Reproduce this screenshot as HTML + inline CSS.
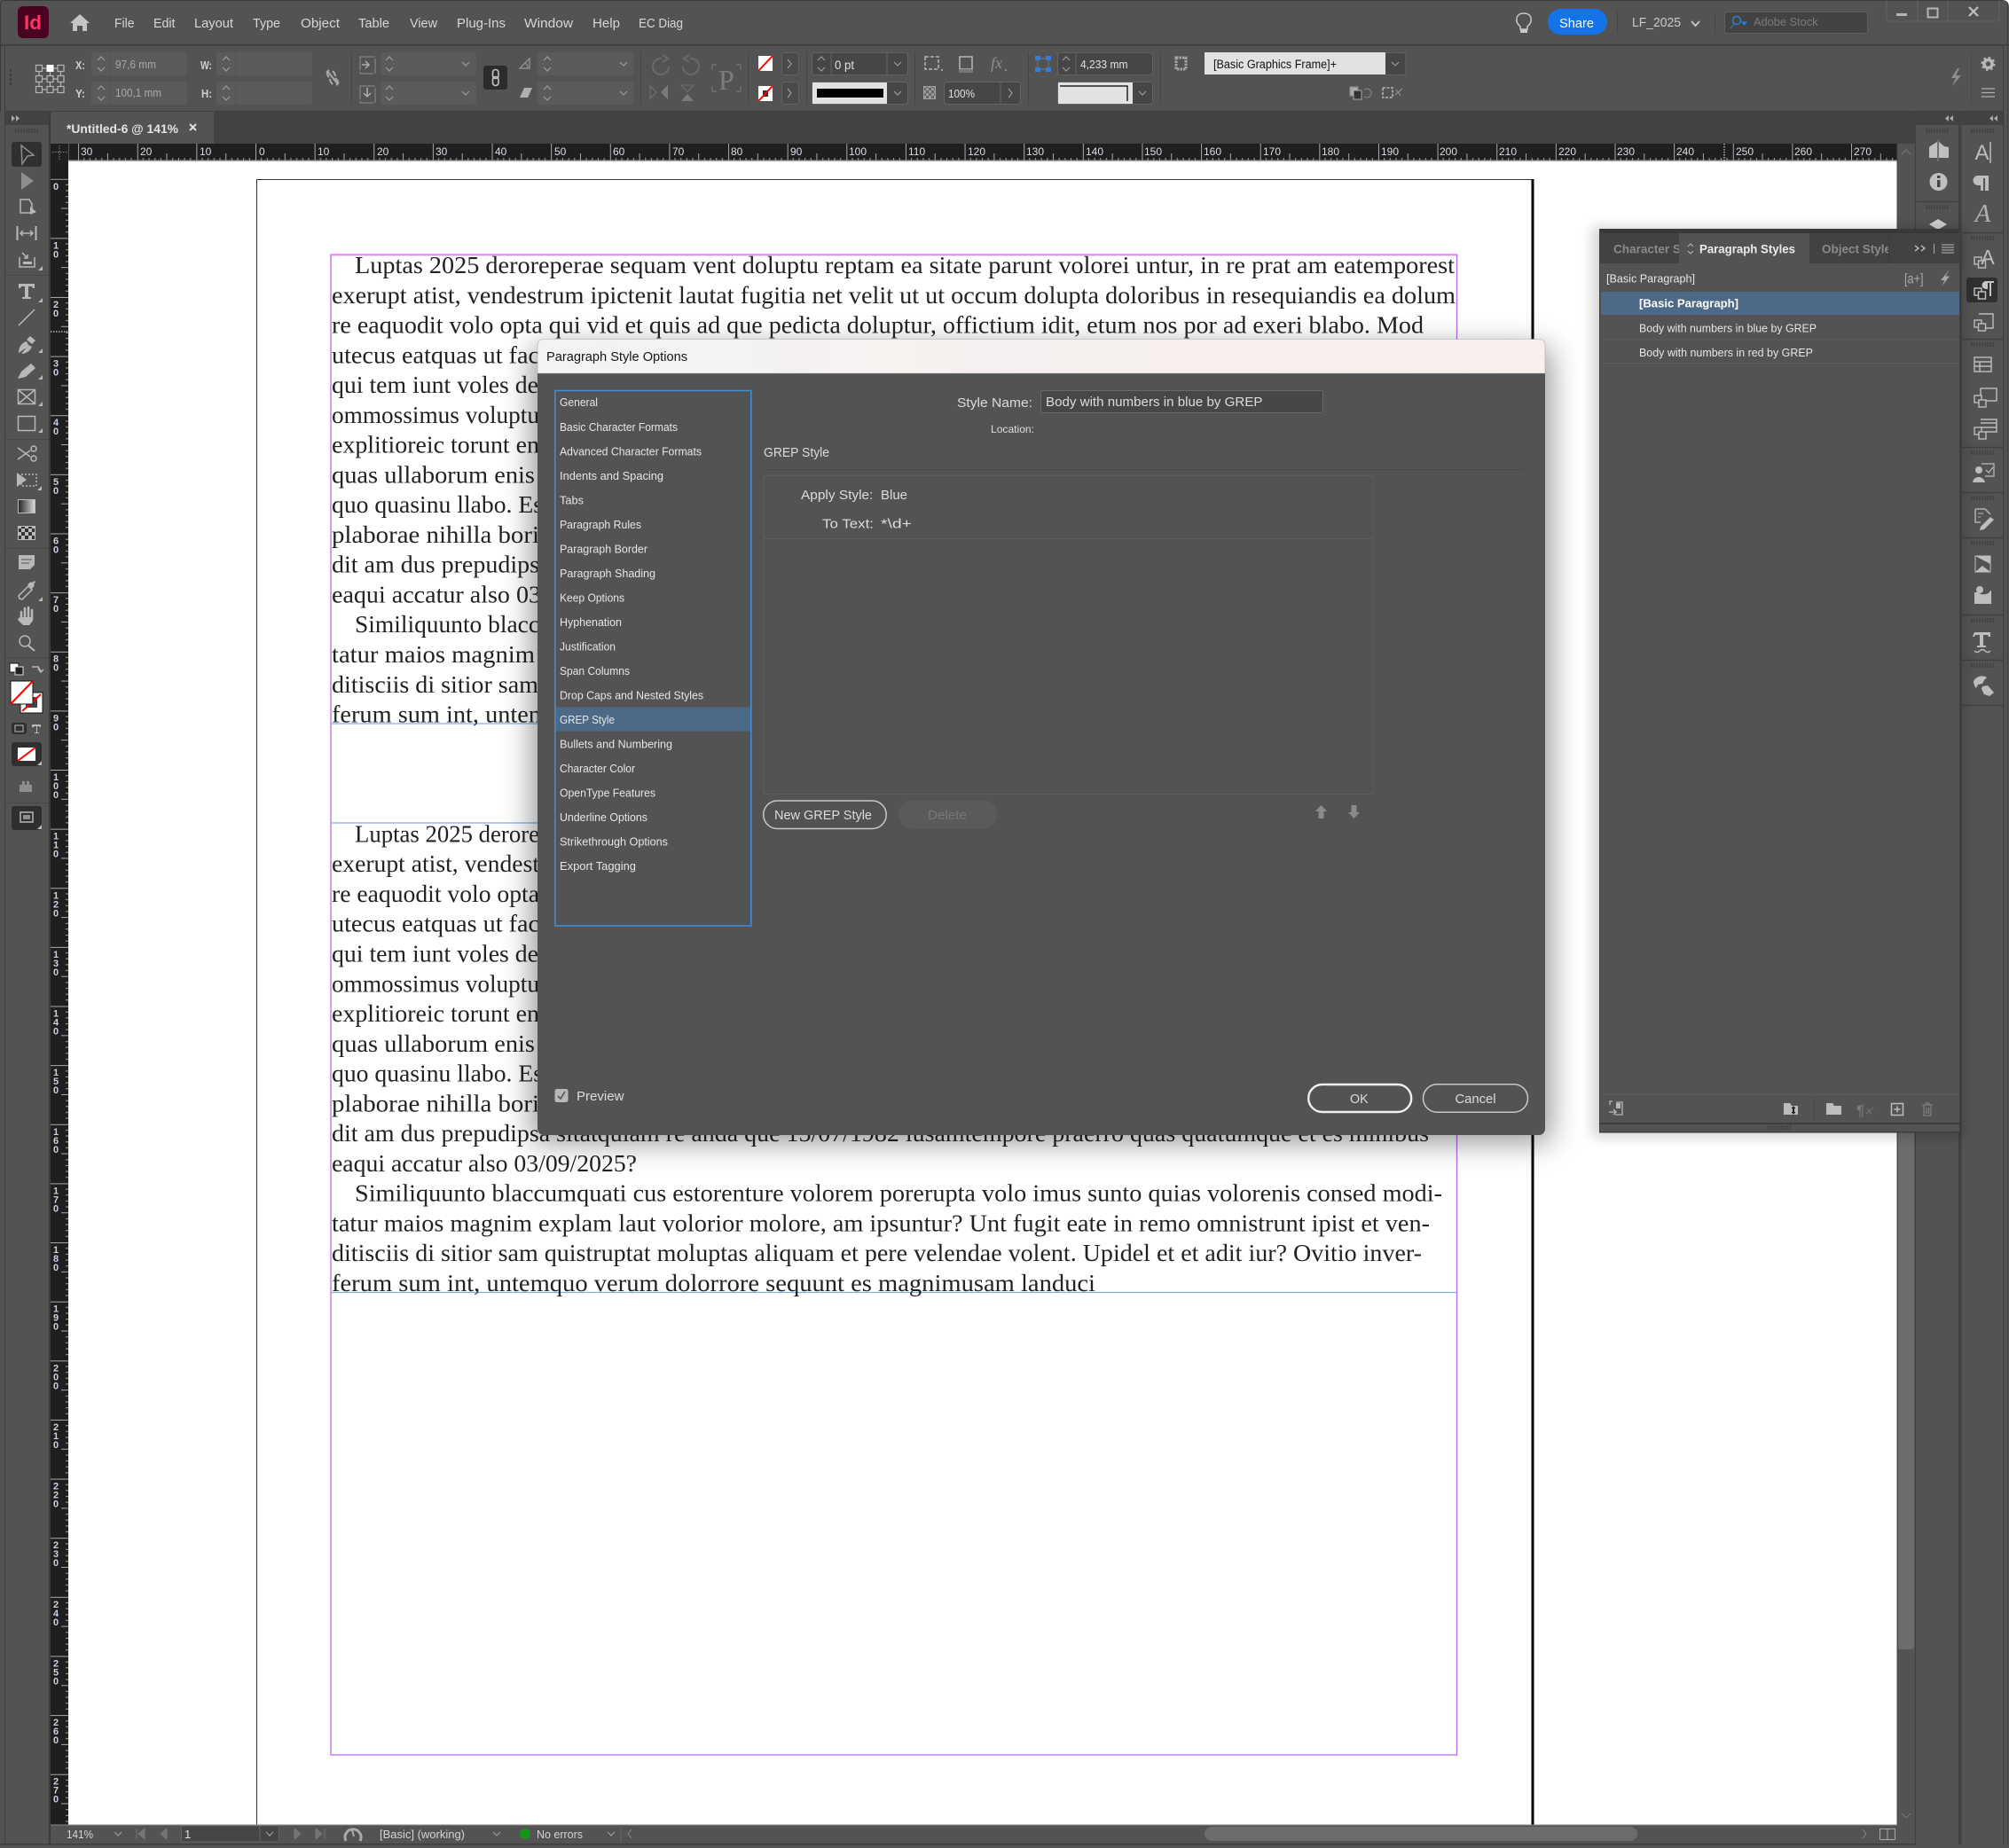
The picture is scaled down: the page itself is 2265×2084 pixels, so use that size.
<!DOCTYPE html>
<html><head><meta charset="utf-8"><title>Paragraph Style Options</title>
<style>
html,body{margin:0;padding:0;background:#535353}
svg{display:block}
text{font-family:"Liberation Sans",sans-serif}
.m{font-size:14.5px;fill:#d6d6d6}
.s{font-family:"Liberation Serif",serif;font-size:27px;fill:#222}
.l{font-size:12.5px;fill:#e6e6e6}
.d{font-size:15px;fill:#dcdcdc}
.c{font-size:12.5px;fill:#d0d0d0}
.r{font-size:12px;fill:#d8dde6}
.v{font-size:11px;fill:#c5d2e6;font-weight:bold}
.i{fill:none;stroke:#b8b8b8;stroke-width:1.5}
.f{fill:#b8b8b8}
.n{fill:none;stroke:#9c9c9c;stroke-width:1.2}
</style></head>
<body>
<svg xmlns="http://www.w3.org/2000/svg" width="2265" height="2084" viewBox="0 0 2265 2084">
<defs>
<pattern id="hr" patternUnits="userSpaceOnUse" x="288" y="162" width="66.63" height="19"><path d="M.5 0V19M33.3 11V19M6.66 16V19M13.3 16V19M20 16V19M26.65 16V19M39.98 16V19M46.64 16V19M53.3 16V19M59.97 16V19" stroke="#a8a8a8" fill="none"/></pattern>
<pattern id="vr" patternUnits="userSpaceOnUse" x="57" y="201.7" width="20" height="66.63"><path d="M0 .5H20M12 33.3H20M17 6.66H20M17 13.3H20M17 20H20M17 26.65H20M17 39.98H20M17 46.64H20M17 53.3H20M17 59.97H20" stroke="#a8a8a8" fill="none"/></pattern>
<pattern id="ck" patternUnits="userSpaceOnUse" width="8" height="8"><rect width="8" height="8" fill="#bbb"/><rect width="4" height="4" fill="#333"/><rect x="4" y="4" width="4" height="4" fill="#333"/></pattern>
<pattern id="ck2" patternUnits="userSpaceOnUse" width="6" height="6"><rect width="6" height="6" fill="#999"/><rect width="3" height="3" fill="#666"/><rect x="3" y="3" width="3" height="3" fill="#666"/></pattern>
<linearGradient id="gr"><stop offset="0" stop-color="#222"/><stop offset="1" stop-color="#ddd"/></linearGradient>
<linearGradient id="tb"><stop offset="0" stop-color="#f3f3f3"/><stop offset="1" stop-color="#f9efec"/></linearGradient>
<filter id="bl" x="-20%" y="-20%" width="140%" height="140%"><feGaussianBlur stdDeviation="17"/></filter>
<filter id="bs" x="-10%" y="-10%" width="120%" height="120%"><feGaussianBlur stdDeviation="7"/></filter>
<g id="up"><path d="M-4 2L0-2 4 2" class="n"/></g>
<g id="dn"><path d="M-4-2L0 2 4-2" class="n"/></g>
<g id="stp"><use href="#up" x="0" y="-6"/><use href="#dn" x="0" y="6"/></g>
<g id="grip"><path d="M0 0v5M3 0v5M6 0v5M9 0v5M12 0v5M15 0v5M18 0v5M21 0v5M24 0v5" stroke="#383838" fill="none"/></g>
<g id="co"><path d="M0 0L5 0 5-5Z" fill="#b8b8b8"/></g>
</defs>

<!-- window -->
<rect width="2265" height="2084" fill="#535353"/>
<rect x=".5" y=".5" width="2263" height="2080" rx="4" fill="none" stroke="#3a3a3a"/>
<path d="M2257 0H2265V8Q2265 0 2257 0Z" fill="#fff"/>
<rect y="50" width="2265" height="1.5" fill="#3c3c3c"/>
<rect x="5" y="50" width="1" height="76" fill="#3e3e3e"/>
<rect x="2258" y="50" width="1" height="76" fill="#3e3e3e"/>
<rect y="125" x="5" width="2254" height="1.5" fill="#3f3f3f"/>

<!-- menu -->
<rect x="20" y="7" width="35" height="36" rx="6" fill="#49021f"/>
<text x="27" y="33" font-size="22" font-weight="bold" fill="#ff3366" textLength="20" lengthAdjust="spacingAndGlyphs">Id</text>
<path d="M90 16L101 26H98V35H93V29H87V35H82V26H79Z" fill="#c4c4c4"/>
<text class="m" x="129" y="31" textLength="22.5" lengthAdjust="spacingAndGlyphs">File</text>
<text class="m" x="173" y="31" textLength="24.5" lengthAdjust="spacingAndGlyphs">Edit</text>
<text class="m" x="219" y="31" textLength="44" lengthAdjust="spacingAndGlyphs">Layout</text>
<text class="m" x="285" y="31" textLength="31" lengthAdjust="spacingAndGlyphs">Type</text>
<text class="m" x="339" y="31" textLength="44" lengthAdjust="spacingAndGlyphs">Object</text>
<text class="m" x="404" y="31" textLength="35" lengthAdjust="spacingAndGlyphs">Table</text>
<text class="m" x="462" y="31" textLength="31" lengthAdjust="spacingAndGlyphs">View</text>
<text class="m" x="515" y="31" textLength="55" lengthAdjust="spacingAndGlyphs">Plug-Ins</text>
<text class="m" x="591" y="31" textLength="55" lengthAdjust="spacingAndGlyphs">Window</text>
<text class="m" x="668" y="31" textLength="31" lengthAdjust="spacingAndGlyphs">Help</text>
<text class="m" x="720" y="31" textLength="50" lengthAdjust="spacingAndGlyphs">EC Diag</text>
<path d="M1714 30C1707 24 1709 15 1718 15C1727 15 1729 24 1722 30V33H1714Z" fill="none" stroke="#c8c8c8" stroke-width="1.5"/><rect x="1714" y="33" width="8" height="4" fill="#c8c8c8"/>
<rect x="1745" y="10" width="67" height="29" rx="14.5" fill="#1473e6"/>
<text x="1758" y="31" font-size="15" fill="#fff" textLength="39" lengthAdjust="spacingAndGlyphs">Share</text>
<rect x="1823" y="13" width="1" height="24" fill="#474747"/>
<text x="1840" y="30" font-size="15" fill="#c9c9c9" textLength="55" lengthAdjust="spacingAndGlyphs">LF_2025</text>
<path d="M1907 24L1911.500 29 1916 24" fill="none" stroke="#c8c8c8" stroke-width="1.8"/>
<rect x="1933" y="13" width="1" height="24" fill="#474747"/>
<rect x="1944.500" y="13.500" width="161" height="24" rx="2" fill="#434343" stroke="#5f5f5f"/>
<circle cx="1958" cy="23" r="4.500" fill="none" stroke="#2f7fd6" stroke-width="1.5"/><path d="M1955 27L1951 32M1964 25h5l-2.500 3z" stroke="#2f7fd6" fill="#2f7fd6"/>
<text x="1977" y="29" font-size="13" fill="#7b7b7b" textLength="72.500" lengthAdjust="spacingAndGlyphs">Adobe Stock</text>
<path d="M2127 0V21Q2127 24 2130 24H2251Q2254 24 2254 21V0M2162 0V24M2196 0V24" fill="none" stroke="#626262"/>
<rect x="2138" y="15" width="12" height="3" fill="#b5b5b5"/>
<rect x="2173.500" y="9.500" width="11" height="10" fill="none" stroke="#b5b5b5" stroke-width="2"/>
<path d="M2220 8L2230 18M2230 8L2220 18" stroke="#c0c0c0" stroke-width="2.200"/>

<!-- control panel -->
<path d="M12 78v3M12 83v3M12 88v3M12 93v3" stroke="#3c3c3c" stroke-width="2"/>
<g fill="none" stroke="#b5b5b5" stroke-width="1.200">
<rect x="40.500" y="73.500" width="7" height="7"/><rect x="65" y="73.500" width="7" height="7"/>
<rect x="40.500" y="85.500" width="7" height="7"/><rect x="53" y="85.500" width="7" height="7"/><rect x="65" y="85.500" width="7" height="7"/>
<rect x="40.500" y="97.500" width="7" height="7"/><rect x="53" y="97.500" width="7" height="7"/><rect x="65" y="97.500" width="7" height="7"/>
<path d="M47.500 77h5M60 77h5M47.500 89h5M60 89h5M47.500 101h5M60 101h5M44 80.500v5M44 92.500v5M56.500 80.500v5M56.500 92.500v5M68.500 80.500v5M68.500 92.500v5"/></g>
<rect x="52.500" y="73" width="8" height="8" fill="#fff"/>

<g fill="#5b5b5b">
<rect x="103" y="59" width="108" height="26" rx="3"/><rect x="103" y="92" width="108" height="26" rx="3"/>
<rect x="244" y="59" width="108" height="26" rx="3"/><rect x="244" y="92" width="108" height="26" rx="3"/>
<rect x="429" y="59" width="108" height="26" rx="3"/><rect x="429" y="92" width="108" height="26" rx="3"/>
<rect x="606" y="59" width="108" height="26" rx="3"/><rect x="606" y="92" width="108" height="26" rx="3"/>
</g>
<g fill="#535353"><rect x="124" y="59" width="1" height="26"/><rect x="124" y="92" width="1" height="26"/><rect x="265" y="59" width="1" height="26"/><rect x="265" y="92" width="1" height="26"/></g>
<use href="#stp" x="114" y="72"/><use href="#stp" x="114" y="105"/><use href="#stp" x="255" y="72"/><use href="#stp" x="255" y="105"/>
<use href="#stp" x="439" y="72"/><use href="#stp" x="439" y="105"/><use href="#stp" x="617" y="72"/><use href="#stp" x="617" y="105"/>
<use href="#dn" x="525" y="72"/><use href="#dn" x="525" y="105"/><use href="#dn" x="703" y="72"/><use href="#dn" x="703" y="105"/>
<text class="c" x="85" y="78" textLength="11" lengthAdjust="spacingAndGlyphs" font-weight="bold">X:</text>
<text class="c" x="85" y="110" textLength="11" lengthAdjust="spacingAndGlyphs" font-weight="bold">Y:</text>
<text class="c" x="226" y="78" textLength="13" lengthAdjust="spacingAndGlyphs" font-weight="bold">W:</text>
<text class="c" x="227" y="110" textLength="12" lengthAdjust="spacingAndGlyphs" font-weight="bold">H:</text>
<text x="130" y="77" font-size="13" fill="#a8a8a8" textLength="46" lengthAdjust="spacingAndGlyphs">97,6 mm</text>
<text x="130" y="109" font-size="13" fill="#a8a8a8" textLength="52" lengthAdjust="spacingAndGlyphs">100,1 mm</text>
<path d="M369 80L381 95M371 79c-4 2-2 6 0 8M378 88c3 3 5 6 1 8M375 80c2 2 3 4 3 6M372 89c0 2 1 4 3 6" fill="none" stroke="#a8a8a8" stroke-width="2"/>
<rect x="396" y="59" width="1" height="59" fill="#474747"/>
<rect x="406" y="64" width="17" height="19" fill="none" stroke="#8e8e8e" stroke-dasharray="17 2"/><path d="M408 73h8M412 69l4 4-4 4" stroke="#b0b0b0" fill="none" stroke-width="1.500"/>
<rect x="406" y="97" width="17" height="19" fill="none" stroke="#8e8e8e" stroke-dasharray="17 2"/><path d="M414 99v10M410 105l4 4 4-4" stroke="#b0b0b0" fill="none" stroke-width="1.500"/>
<rect x="545" y="74" width="27" height="27" rx="3" fill="#2c2c2c"/>
<rect x="555.500" y="78.500" width="6.500" height="10" rx="3.200" fill="none" stroke="#c5c5c5" stroke-width="1.600"/><rect x="555.500" y="86.500" width="6.500" height="10" rx="3.200" fill="none" stroke="#c5c5c5" stroke-width="1.600"/>
<path d="M586 77L597 66V77ZM592 71a6 6 0 0 1 3 6" fill="none" stroke="#8e8e8e" stroke-width="1.400"/><path d="M586 110L591 99H600L595 110Z" fill="#b0b0b0"/>
<rect x="722" y="59" width="1" height="59" fill="#474747"/>
<g fill="none" stroke="#6a6a6a" stroke-width="2"><path d="M746 66a9 9 0 1 0 8 9M747 62l6 4-6 4"/><path d="M778 66a9 9 0 1 1-8 9M777 62l-6 4 6 4"/></g>
<path d="M733 97l7 7-7 7z" fill="none" stroke="#6e6e6e"/><path d="M753 96v16l-8-8z M768 114h14l-7-8z" fill="#7a7a7a"/><path d="M768 96h14l-7 8z" fill="none" stroke="#6e6e6e"/>
<path d="M803 79v-6h5M830 73h5v6M803 97v6h5M835 97v6h-5" fill="none" stroke="#7d7d7d"/>
<text x="810" y="101" font-size="32" fill="#7d7d7d" style="font-family:'Liberation Serif',serif">P</text>
<rect x="843" y="59" width="1" height="59" fill="#474747"/>
<rect x="855" y="63" width="16" height="17" fill="#fff"/><path d="M855 80L871 63" stroke="#f00" stroke-width="2"/>
<rect x="855" y="97" width="16" height="17" fill="#fff"/><rect x="860" y="102" width="6" height="7" fill="#333"/><path d="M855 114L871 97" stroke="#f00" stroke-width="2"/>
<rect x="881.500" y="59.500" width="19" height="25" rx="3" fill="#4a4a4a" stroke="#626262"/><rect x="881.500" y="92.500" width="19" height="25" rx="3" fill="#4a4a4a" stroke="#626262"/>
<path d="M888 67l4 5-4 5M888 100l4 5-4 5" fill="none" stroke="#b0b0b0"/>
<rect x="909" y="59" width="1" height="59" fill="#474747"/>
<rect x="915.500" y="59.500" width="108" height="25" rx="3" fill="#464646" stroke="#636363"/>
<path d="M937 60v24M1000 60v24" stroke="#636363"/><use href="#stp" x="926" y="72"/><use href="#dn" x="1012" y="72"/>
<text x="941" y="78" font-size="13.500" fill="#e0e0e0" textLength="22" lengthAdjust="spacingAndGlyphs">0 pt</text>
<rect x="915.500" y="92.500" width="108" height="25" rx="3" fill="#464646" stroke="#636363"/>
<rect x="916" y="93" width="84" height="24" fill="#e2e2e2"/><rect x="921" y="100" width="75" height="10" fill="#000"/><use href="#dn" x="1012" y="105"/>
<rect x="1031" y="59" width="1" height="59" fill="#474747"/>
<rect x="1043" y="64" width="15" height="14" class="i" stroke-dasharray="4 2"/><circle cx="1062" cy="79" r="1" fill="#b8b8b8"/>
<rect x="1082" y="64" width="14" height="14" class="i"/><rect x="1081" y="78" width="16" height="4" fill="#777"/>
<text x="1117" y="77" font-size="18" font-style="italic" fill="#8e8e8e" style="font-family:'Liberation Serif',serif">fx</text><circle cx="1134" cy="79" r="1" fill="#999"/>
<rect x="1041.500" y="97.500" width="13" height="14" fill="url(#ck2)" stroke="#a0a0a0"/>
<rect x="1064.500" y="92.500" width="86" height="25" rx="3" fill="#464646" stroke="#636363"/><path d="M1128 93v24" stroke="#636363"/><path d="M1137 100l4 5-4 5" fill="none" stroke="#b0b0b0"/>
<text x="1069" y="110" font-size="13" fill="#e0e0e0" textLength="30" lengthAdjust="spacingAndGlyphs">100%</text>
<rect x="1159" y="59" width="1" height="59" fill="#474747"/>
<g fill="#2f7fe0"><rect x="1167" y="63" width="6" height="5"/><rect x="1179" y="63" width="6" height="5"/><rect x="1167" y="76" width="6" height="5"/><rect x="1179" y="76" width="6" height="5"/></g><path d="M1173 66h6M1173 78h6M1170 68v8M1182 68v8" stroke="#777"/>
<rect x="1192.500" y="59.500" width="107" height="25" rx="3" fill="#464646" stroke="#636363"/><path d="M1213 60v24" stroke="#636363"/><use href="#stp" x="1202" y="72"/>
<text x="1218" y="77" font-size="13" fill="#e0e0e0" textLength="53.500" lengthAdjust="spacingAndGlyphs">4,233 mm</text>
<rect x="1192.500" y="92.500" width="107" height="25" rx="3" fill="#464646" stroke="#636363"/>
<rect x="1193" y="93" width="84" height="24" fill="#e2e2e2"/><path d="M1195 97H1271V114" fill="none" stroke="#222" stroke-width="1.500"/><use href="#dn" x="1288" y="105"/>
<rect x="1308" y="59" width="1" height="59" fill="#474747"/>
<rect x="1326" y="65" width="11" height="13" fill="none" stroke="#a5a5a5" stroke-width="3" stroke-dasharray="2.500 1"/>
<rect x="1358" y="59" width="204" height="25" fill="#e2e2e2"/><path d="M1562 59.500h20q3 0 3 3v19q0 3-3 3h-20" fill="#464646" stroke="#636363"/><use href="#dn" x="1573" y="72"/>
<text x="1368" y="77" font-size="13.500" fill="#111" textLength="139" lengthAdjust="spacingAndGlyphs">[Basic Graphics Frame]+</text>
<rect x="1522" y="98" width="9" height="10" fill="#aaa" stroke="#888"/><rect x="1526" y="102" width="9" height="10" fill="#333" stroke="#aaa"/><path d="M1538 101a5 5 0 1 1 0 8" fill="none" stroke="#888"/>
<rect x="1559" y="99" width="11" height="11" class="i" stroke-dasharray="3 1.500"/><path d="M1573 107l8-7M1574 101l5 7" stroke="#999" fill="none"/>
<path d="M2207 77L2200 88H2205L2201 97L2211 85H2205L2209 77Z" fill="#8e8e8e"/>
<rect x="2222" y="59" width="1" height="59" fill="#474747"/>
<circle cx="2241.500" cy="72" r="4.500" fill="none" stroke="#b8b8b8" stroke-width="3.500"/><circle cx="2241.500" cy="72" r="7" fill="none" stroke="#b8b8b8" stroke-width="2" stroke-dasharray="2.500 3"/>
<path d="M2234 100h15M2234 104.500h15M2234 109h15" stroke="#b0b0b0" stroke-width="1.300"/>

<!-- tabs -->
<rect x="6" y="126" width="49" height="15" fill="#424242"/>
<path d="M13 130l4 3.500-4 3.500zM18 130l4 3.500-4 3.500z" fill="#aaa"/>
<rect x="57" y="126" width="2102" height="36" fill="#424242"/>
<rect x="57" y="126" width="184" height="36" fill="#535353"/>
<text x="75" y="150" font-size="14" font-weight="bold" fill="#e4e4e4" textLength="126" lengthAdjust="spacingAndGlyphs">*Untitled-6 @ 141%</text>
<path d="M214 140l7 7M221 140l-7 7" stroke="#e0e0e0" stroke-width="2"/>

<!-- canvas -->
<rect x="77" y="181" width="2062" height="1877" fill="#fff"/>
<rect x="57" y="162" width="2082" height="19" fill="#1f1f1f"/>
<rect x="57" y="162" width="2082" height="19" fill="url(#hr)"/>
<rect x="57" y="162" width="30" height="19" fill="#1f1f1f"/><path d="M77.500 162V181" stroke="#555"/>
<path d="M59 171.500H76M67 164V180" stroke="#888" stroke-dasharray="1.500 1.500"/>
<rect x="77" y="180.500" width="2062" height="1.500" fill="#a8a8a8"/>
<path d="M1944 162V181" stroke="#fff" stroke-dasharray="1.500 1.500"/>
<g>
<text class="r" x="91" y="175">30</text><text class="r" x="158" y="175">20</text><text class="r" x="225" y="175">10</text><text class="r" x="292" y="175">0</text><text class="r" x="358" y="175">10</text><text class="r" x="425" y="175">20</text><text class="r" x="491" y="175">30</text><text class="r" x="558" y="175">40</text><text class="r" x="625" y="175">50</text><text class="r" x="691" y="175">60</text><text class="r" x="758" y="175">70</text><text class="r" x="824" y="175">80</text><text class="r" x="891" y="175">90</text><text class="r" x="957" y="175">100</text><text class="r" x="1024" y="175">110</text><text class="r" x="1091" y="175">120</text><text class="r" x="1157" y="175">130</text><text class="r" x="1224" y="175">140</text><text class="r" x="1290" y="175">150</text><text class="r" x="1357" y="175">160</text><text class="r" x="1424" y="175">170</text><text class="r" x="1490" y="175">180</text><text class="r" x="1557" y="175">190</text><text class="r" x="1623" y="175">200</text><text class="r" x="1690" y="175">210</text><text class="r" x="1757" y="175">220</text><text class="r" x="1823" y="175">230</text><text class="r" x="1890" y="175">240</text><text class="r" x="1957" y="175">250</text><text class="r" x="2023" y="175">260</text><text class="r" x="2090" y="175">270</text>
</g>
<rect x="57" y="181" width="20" height="1877" fill="#1f1f1f"/>
<rect x="57" y="201.700" width="20" height="1856" fill="url(#vr)"/>
<path d="M57 374H76" stroke="#fff" stroke-dasharray="1.500 1.500"/>
<text class="v" x="60" y="214">0</text>
<text class="v" x="60" y="280.300">1<tspan x="60" dy="10">0</tspan></text>
<text class="v" x="60" y="347">2<tspan x="60" dy="10">0</tspan></text>
<text class="v" x="60" y="413.600">3<tspan x="60" dy="10">0</tspan></text>
<text class="v" x="60" y="480.200">4<tspan x="60" dy="10">0</tspan></text>
<text class="v" x="60" y="546.900">5<tspan x="60" dy="10">0</tspan></text>
<text class="v" x="60" y="613.500">6<tspan x="60" dy="10">0</tspan></text>
<text class="v" x="60" y="680.100">7<tspan x="60" dy="10">0</tspan></text>
<text class="v" x="60" y="746.700">8<tspan x="60" dy="10">0</tspan></text>
<text class="v" x="60" y="813.400">9<tspan x="60" dy="10">0</tspan></text>
<text class="v" x="60" y="880">1<tspan x="60" dy="10">0</tspan><tspan x="60" dy="10">0</tspan></text>
<text class="v" x="60" y="946.600">1<tspan x="60" dy="10">1</tspan><tspan x="60" dy="10">0</tspan></text>
<text class="v" x="60" y="1013.300">1<tspan x="60" dy="10">2</tspan><tspan x="60" dy="10">0</tspan></text>
<text class="v" x="60" y="1079.900">1<tspan x="60" dy="10">3</tspan><tspan x="60" dy="10">0</tspan></text>
<text class="v" x="60" y="1146.500">1<tspan x="60" dy="10">4</tspan><tspan x="60" dy="10">0</tspan></text>
<text class="v" x="60" y="1213.200">1<tspan x="60" dy="10">5</tspan><tspan x="60" dy="10">0</tspan></text>
<text class="v" x="60" y="1279.800">1<tspan x="60" dy="10">6</tspan><tspan x="60" dy="10">0</tspan></text>
<text class="v" x="60" y="1346.400">1<tspan x="60" dy="10">7</tspan><tspan x="60" dy="10">0</tspan></text>
<text class="v" x="60" y="1413">1<tspan x="60" dy="10">8</tspan><tspan x="60" dy="10">0</tspan></text>
<text class="v" x="60" y="1479.700">1<tspan x="60" dy="10">9</tspan><tspan x="60" dy="10">0</tspan></text>
<text class="v" x="60" y="1546.300">2<tspan x="60" dy="10">0</tspan><tspan x="60" dy="10">0</tspan></text>
<text class="v" x="60" y="1612.900">2<tspan x="60" dy="10">1</tspan><tspan x="60" dy="10">0</tspan></text>
<text class="v" x="60" y="1679.600">2<tspan x="60" dy="10">2</tspan><tspan x="60" dy="10">0</tspan></text>
<text class="v" x="60" y="1746.200">2<tspan x="60" dy="10">3</tspan><tspan x="60" dy="10">0</tspan></text>
<text class="v" x="60" y="1812.800">2<tspan x="60" dy="10">4</tspan><tspan x="60" dy="10">0</tspan></text>
<text class="v" x="60" y="1879.500">2<tspan x="60" dy="10">5</tspan><tspan x="60" dy="10">0</tspan></text>
<text class="v" x="60" y="1946.100">2<tspan x="60" dy="10">6</tspan><tspan x="60" dy="10">0</tspan></text>
<text class="v" x="60" y="2012.700">2<tspan x="60" dy="10">7</tspan><tspan x="60" dy="10">0</tspan></text>

<!-- page -->
<path d="M289.500 2058V202.500H1727" fill="none" stroke="#333"/>
<rect x="1726.500" y="202" width="3" height="1856" fill="#000"/>
<rect x="373" y="287" width="1269.500" height="1692" fill="none" stroke="#b56cf2" stroke-width="1.300"/>
<path d="M373 287.500H1642" stroke="#f27dff" stroke-width="1.800"/>
<path d="M373 816H610M373 928H610M373 1457.500H1642" stroke="#82aef0" stroke-width="1.200"/>

<text class="s" x="400" y="308" textLength="1240" lengthAdjust="spacingAndGlyphs">Luptas 2025 deroreperae sequam vent doluptu reptam ea sitate parunt volorei untur, in re prat am eatemporest</text>
<text class="s" x="374" y="341.800" textLength="1267" lengthAdjust="spacingAndGlyphs">exerupt atist, vendestrum ipictenit lautat fugitia net velit ut ut occum dolupta doloribus in resequiandis ea dolum</text>
<text class="s" x="374" y="375.500" textLength="1231" lengthAdjust="spacingAndGlyphs">re eaquodit volo opta qui vid et quis ad que pedicta doluptur, offictium idit, etum nos por ad exeri blabo. Mod</text>
<text class="s" x="374" y="409.300" textLength="234" lengthAdjust="spacingAndGlyphs">utecus eatquas ut fac</text>
<text class="s" x="374" y="443.100" textLength="233" lengthAdjust="spacingAndGlyphs">qui tem iunt voles de</text>
<text class="s" x="374" y="476.900" textLength="234" lengthAdjust="spacingAndGlyphs">ommossimus voluptu</text>
<text class="s" x="374" y="510.600" textLength="234" lengthAdjust="spacingAndGlyphs">explitioreic torunt en</text>
<text class="s" x="374" y="544.400" textLength="229" lengthAdjust="spacingAndGlyphs">quas ullaborum enis</text>
<text class="s" x="374" y="578.200" textLength="238" lengthAdjust="spacingAndGlyphs">quo quasinu llabo. Es</text>
<text class="s" x="374" y="611.900" textLength="234" lengthAdjust="spacingAndGlyphs">plaborae nihilla bori</text>
<text class="s" x="374" y="645.700" textLength="234" lengthAdjust="spacingAndGlyphs">dit am dus prepudips</text>
<text class="s" x="374" y="679.500" textLength="236" lengthAdjust="spacingAndGlyphs">eaqui accatur also 03</text>
<text class="s" x="400" y="713.200" textLength="208" lengthAdjust="spacingAndGlyphs">Similiquunto blacc</text>
<text class="s" x="374" y="747" textLength="229" lengthAdjust="spacingAndGlyphs">tatur maios magnim</text>
<text class="s" x="374" y="780.800" textLength="233" lengthAdjust="spacingAndGlyphs">ditisciis di sitior sam</text>
<text class="s" x="374" y="814.500" textLength="236" lengthAdjust="spacingAndGlyphs">ferum sum int, unten</text>

<text class="s" x="400" y="949.400" textLength="208" lengthAdjust="spacingAndGlyphs">Luptas 2025 derore</text>
<text class="s" x="374" y="983.200" textLength="234" lengthAdjust="spacingAndGlyphs">exerupt atist, vendest</text>
<text class="s" x="374" y="1016.900" textLength="234" lengthAdjust="spacingAndGlyphs">re eaquodit volo opta</text>
<text class="s" x="374" y="1050.700" textLength="234" lengthAdjust="spacingAndGlyphs">utecus eatquas ut fac</text>
<text class="s" x="374" y="1084.500" textLength="233" lengthAdjust="spacingAndGlyphs">qui tem iunt voles de</text>
<text class="s" x="374" y="1118.300" textLength="234" lengthAdjust="spacingAndGlyphs">ommossimus voluptu</text>
<text class="s" x="374" y="1152" textLength="234" lengthAdjust="spacingAndGlyphs">explitioreic torunt en</text>
<text class="s" x="374" y="1185.800" textLength="229" lengthAdjust="spacingAndGlyphs">quas ullaborum enis</text>
<text class="s" x="374" y="1219.600" textLength="238" lengthAdjust="spacingAndGlyphs">quo quasinu llabo. Es</text>
<text class="s" x="374" y="1253.300" textLength="234" lengthAdjust="spacingAndGlyphs">plaborae nihilla bori</text>
<text class="s" x="374" y="1287.100" textLength="1237" lengthAdjust="spacingAndGlyphs">dit am dus prepudipsa sitatquiam re anda que 15/07/1982 iusamtempore praerro quas quatumque et es minibus</text>
<text class="s" x="374" y="1320.900" textLength="344" lengthAdjust="spacingAndGlyphs">eaqui accatur also 03/09/2025?</text>
<text class="s" x="400" y="1354.600" textLength="1226" lengthAdjust="spacingAndGlyphs">Similiquunto blaccumquati cus estorenture volorem porerupta volo imus sunto quias volorenis consed modi-</text>
<text class="s" x="374" y="1388.400" textLength="1238" lengthAdjust="spacingAndGlyphs">tatur maios magnim explam laut volorior molore, am ipsuntur? Unt fugit eate in remo omnistrunt ipist et ven-</text>
<text class="s" x="374" y="1422.200" textLength="1229" lengthAdjust="spacingAndGlyphs">ditisciis di sitior sam quistruptat moluptas aliquam et pere velendae volent. Upidel et et adit iur? Ovitio inver-</text>
<text class="s" x="374" y="1455.900" textLength="861" lengthAdjust="spacingAndGlyphs">ferum sum int, untemquo verum dolorrore sequunt es magnimusam landuci</text>

<!-- left tools -->
<rect x="0" y="141" width="57" height="1940" fill="#535353"/>
<rect x="0" y="126" width="6" height="1955" fill="#535353"/>
<rect x="5" y="126" width="1" height="1954" fill="#414141"/>
<rect x="55" y="126" width="2" height="1954" fill="#3c3c3c"/>
<use href="#grip" x="18" y="145"/>
<rect x="13" y="160" width="34" height="28" rx="3" fill="#303030"/>
<path d="M24 164L38 175L31 176L25 185Z" fill="none" stroke="#8e8e8e" stroke-width="1.500"/>
<path d="M24 194L38 204L24 214Z" fill="#8e8e8e"/>
<path d="M23 225H33L36 230V240H23Z" class="i"/><path d="M34 233L41 239L34 242Z" class="f"/>
<path d="M19.500 255V271M40.500 255V271" fill="none" stroke="#b8b8b8" stroke-width="2"/><path d="M24 263H36M26 260L23 263L26 266M34 260L37 263L34 266" class="i"/>
<path d="M22 290V301H39V290M25 285L31 291M31 287V291H27" class="i"/><rect x="26" y="295" width="10" height="3" fill="#b8b8b8"/>
<use href="#co" x="43" y="305"/>
<rect x="5" y="310" width="50" height="1" fill="#484848"/>
<path d="M21 320h18v5h-2l-1-2h-4v12h3v2h-10v-2h3v-12h-4l-1 2h-2z" fill="#b8b8b8"/><use href="#co" x="43" y="341"/>
<path d="M21 367L39 349" class="i"/>
<path d="M21 398c0-7 4-12 9-13l2 4 4 2c-2 5-7 8-12 8l6-7M30 383l4-4 6 5-4 4z" fill="#b8b8b8"/><use href="#co" x="43" y="398"/>
<path d="M20 427L24 419L35 410L40 415L29 425Z" fill="#b8b8b8"/><use href="#co" x="43" y="428"/>
<rect x="20.500" y="439.500" width="19" height="16" class="i"/><path d="M21 440L39 455M39 440L21 455" class="i"/><use href="#co" x="43" y="458"/>
<rect x="20.500" y="469.500" width="19" height="16" class="i"/><use href="#co" x="43" y="488"/>
<rect x="5" y="495" width="50" height="1" fill="#484848"/>
<path d="M20 505L34 515M20 518L34 508" class="i"/><circle cx="38" cy="506" r="3" class="i"/><circle cx="38" cy="517" r="3" class="i"/>
<path d="M19 533L30 541L19 549Z" class="f"/><rect x="24" y="535" width="17" height="13" class="i" stroke-dasharray="2 2"/><use href="#co" x="42" y="553"/>
<rect x="20.500" y="563.500" width="19" height="15" fill="url(#gr)" stroke="#bbb"/>
<rect x="20.500" y="593.500" width="19" height="15" fill="url(#ck)" stroke="#bbb"/>
<rect x="5" y="618" width="50" height="1" fill="#484848"/>
<path d="M21 626H39V637L34 642H21Z" fill="#b8b8b8"/><path d="M24 631H36M24 635H33" stroke="#535353"/>
<path d="M22 675l-1-3 11-11 4 4-11 11z" fill="none" stroke="#b8b8b8" stroke-width="1.500"/><path d="M31 659l4-3 1 1 3-2 1 1-2 3 1 1-3 4z" fill="#b8b8b8"/><use href="#co" x="43" y="678"/>
<path d="M24 690v8M28 686v11M32 685v12M36 688v10" fill="none" stroke="#b8b8b8" stroke-width="2.600" stroke-linecap="round"/><path d="M23 696H37V700L33 705H26L20 699l1-2z" fill="#b8b8b8"/>
<circle cx="28" cy="723" r="6" class="i"/><path d="M32 728L39 734" fill="none" stroke="#b8b8b8" stroke-width="2"/>
<rect x="5" y="741" width="50" height="1" fill="#484848"/>
<rect x="11" y="748" width="10" height="10" fill="#fff" stroke="#111"/><rect x="17" y="752" width="9" height="9" fill="#222" stroke="#ddd"/><path d="M36 752h7l3 5M43 754l3 4 3-3" class="i"/>
<rect x="23" y="781" width="25" height="23" fill="#fff" stroke="#111"/><rect x="29" y="786" width="13" height="12" fill="#444"/><path d="M25 802L46 783" stroke="#f00" stroke-width="2"/>
<rect x="12" y="768" width="25" height="26" fill="#fff" stroke="#111"/><path d="M12 794L37 768" stroke="#f00" stroke-width="2"/>
<rect x="13" y="815" width="17" height="13" rx="3" fill="#2f2f2f"/><rect x="17" y="818" width="9" height="7" fill="none" stroke="#b8b8b8"/>
<path d="M36 817h10v3h-1l-1-1h-2v7h2v1h-5v-1h2v-7h-2l-1 1h-2z" fill="#b8b8b8"/>
<rect x="13" y="837" width="34" height="27" rx="3" fill="#2f2f2f"/><rect x="20" y="843" width="20" height="15" fill="#fff"/><path d="M20 858L40 843" stroke="#f00" stroke-width="2"/><use href="#co" x="42" y="863"/>
<path d="M22 885h3v-4h3v4h2v-4h3v4h3v8h-14z" fill="#8e8e8e"/>
<rect x="5" y="905" width="50" height="1" fill="#484848"/>
<rect x="13" y="909" width="34" height="27" rx="3" fill="#2f2f2f"/><rect x="23" y="916" width="14" height="11" fill="none" stroke="#b8b8b8" stroke-width="1.500"/><rect x="26" y="919" width="8" height="5" fill="#8e8e8e"/><use href="#co" x="42" y="935"/>

<!-- status bar -->
<rect x="57" y="2058" width="2102" height="20" fill="#535353"/>
<rect x="57" y="2057.500" width="2082" height="1" fill="#8a8a8a"/>
<rect x="0" y="2080" width="2265" height="4" fill="#535353"/><rect x="0" y="2079" width="2265" height="1.500" fill="#3c3c3c"/>
<text x="75" y="2073" font-size="13" fill="#d5d5d5" textLength="30" lengthAdjust="spacingAndGlyphs">141%</text>
<use href="#dn" x="133" y="2068"/>
<path d="M154 2062V2074M163 2062L156 2068L163 2074ZM188 2062L181 2068L188 2074Z" fill="#757575" stroke="#757575"/>
<rect x="204.500" y="2059" width="110" height="18" rx="2" fill="#464646" stroke="#636363"/><path d="M293 2059v18" stroke="#636363"/><use href="#dn" x="304" y="2068"/>
<text x="208" y="2073" font-size="13" fill="#e0e0e0">1</text>
<path d="M332 2062L339 2068L332 2074ZM356 2062L363 2068L356 2074ZM366 2062V2074" fill="#757575" stroke="#757575"/>
<path d="M390 2076a9 9 0 1 1 16 0" fill="none" stroke="#aaa" stroke-width="3"/><path d="M397 2064l2 7" stroke="#aaa" stroke-width="2"/>
<text x="428" y="2073" font-size="13" fill="#d5d5d5" textLength="96" lengthAdjust="spacingAndGlyphs">[Basic] (working)</text>
<use href="#dn" x="560" y="2068"/>
<circle cx="592" cy="2068" r="6" fill="#139413"/>
<text x="605" y="2073" font-size="13" fill="#d5d5d5" textLength="52" lengthAdjust="spacingAndGlyphs">No errors</text>
<use href="#dn" x="689" y="2068"/>
<rect x="699" y="2058" width="2" height="20" fill="#5c5c5c"/>
<path d="M712 2063L708 2068L712 2073" fill="none" stroke="#8a8a8a"/>
<rect x="1358" y="2060" width="488" height="16" rx="8" fill="#6c6c6c"/>
<path d="M2100 2063L2104 2068L2100 2073" fill="none" stroke="#8a8a8a"/>
<rect x="2119.500" y="2062.500" width="17" height="12" fill="none" stroke="#aaa"/><path d="M2128 2062v12" stroke="#aaa"/>

<!-- right scrollbar and docks -->
<rect x="2139" y="162" width="20" height="1896" fill="#535353"/>
<path d="M2139 162V2058" stroke="#464646"/>
<path d="M2144 174L2149 169L2154 174" fill="none" stroke="#777"/>
<rect x="2140" y="300" width="18" height="1560" fill="#6c6c6c" rx="3"/>
<path d="M2144 2045L2149 2050L2154 2045" fill="none" stroke="#777"/>
<rect x="2159" y="126" width="106" height="1955" fill="#535353"/>
<rect x="2159" y="126" width="1" height="1954" fill="#3f3f3f"/>
<rect x="2208" y="126" width="3.500" height="1954" fill="#414141"/>
<rect x="2258" y="126" width="1.500" height="1954" fill="#414141"/>
<rect x="2263" y="50" width="1" height="2030" fill="#3f3f3f"/>
<rect x="2160" y="126" width="48" height="15" fill="#424242"/><rect x="2211.500" y="126" width="46.500" height="15" fill="#424242"/>
<path d="M2197 130l-4 3.500 4 3.500zM2202 130l-4 3.500 4 3.500zM2247 130l-4 3.500 4 3.500zM2252 130l-4 3.500 4 3.500z" fill="#aaa"/>
<path d="M2160 227.500H2208M2212 262.500H2258M2212 382.500H2258M2212 504.500H2258M2212 555.500H2258M2212 606.500H2258M2212 693.500H2258M2212 744.500H2258M2212 795.500H2258" stroke="#414141" stroke-width="1.400"/>
<use href="#grip" x="2172" y="145"/><use href="#grip" x="2172" y="231"/><use href="#grip" x="2223" y="145"/><use href="#grip" x="2223" y="266"/><use href="#grip" x="2223" y="386"/><use href="#grip" x="2223" y="508"/><use href="#grip" x="2223" y="559"/><use href="#grip" x="2223" y="610"/><use href="#grip" x="2223" y="697"/><use href="#grip" x="2223" y="748"/>
<path d="M2176 165L2184 160V178H2175V166ZM2192 165L2186 160V178H2197V166Z" fill="#bfbfbf"/><path d="M2185 158V182" stroke="#8e8e8e"/>
<circle cx="2185.500" cy="205" r="10" fill="#c0c0c0"/><rect x="2184" y="203" width="3.500" height="8" fill="#444"/><rect x="2184" y="198" width="3.500" height="3" fill="#444"/>
<path d="M2175 253L2185 247L2195 253L2185 259Z" fill="#d0d0d0"/>
<text x="2234.500" y="180" font-size="24" fill="#bdbdbd" text-anchor="middle">A</text><path d="M2244 160V184" stroke="#bdbdbd" stroke-width="1.500"/>
<path d="M2242 198H2230a5 5 0 0 0 0 11h3v6h3v-14h2v14h4z" fill="#bdbdbd"/>
<text x="2235.500" y="250" font-size="29" font-style="italic" fill="#b0b0b0" text-anchor="middle" style="font-family:'Liberation Serif',serif">A</text>
<g fill="none" stroke="#bdbdbd" stroke-width="1.400"><rect x="2226" y="290" width="8" height="8"/><rect x="2230.500" y="294" width="8" height="8" fill="#535353"/></g>
<text x="2241" y="298" font-size="23" fill="#bdbdbd" text-anchor="middle">A</text>
<rect x="2217" y="313" width="35" height="28" rx="3" fill="#303030"/>
<g fill="none" stroke="#c5c5c5" stroke-width="1.400"><rect x="2226" y="325" width="8" height="8"/><rect x="2230.500" y="329" width="8" height="8" fill="#303030"/></g>
<path d="M2248 317H2239a4.500 4.500 0 0 0 0 9v0h2v-7h2v15h2v-15h3z" fill="#c5c5c5"/>
<g fill="none" stroke="#bdbdbd" stroke-width="1.400"><path d="M2231 354h16v16h-8"/><rect x="2226" y="361" width="8" height="8"/><rect x="2230.500" y="365" width="8" height="8" fill="#535353"/>
<rect x="2226" y="403" width="19" height="16"/><path d="M2226 408h19M2226 413h19M2232 408v11"/>
<rect x="2233" y="438" width="18" height="14"/><rect x="2226" y="446" width="8" height="8" fill="#535353"/><rect x="2231" y="451" width="8" height="8" fill="#535353"/>
<path d="M2233 473h18v14h-12M2233 477h18M2233 482h18"/><rect x="2226" y="482" width="8" height="8" fill="#535353"/><rect x="2231" y="487" width="8" height="8" fill="#535353"/></g>
<circle cx="2231" cy="530" r="4" fill="#bdbdbd"/><path d="M2224 544c1-8 12-8 14 0z" fill="#bdbdbd"/><path d="M2234 523h14v14h-10M2239 530l3 3 5-6" fill="none" stroke="#bdbdbd" stroke-width="1.200"/>
<path d="M2227 574h11l6 6M2227 574v15h6" fill="none" stroke="#b0b0b0" stroke-width="1.500"/><path d="M2230 579h6M2230 583h3" stroke="#b0b0b0"/><path d="M2233 594l11-11 4 3-11 11-5 1z" fill="#bdbdbd"/>
<rect x="2227" y="627" width="17" height="18" fill="none" stroke="#bdbdbd"/><path d="M2227 627L2244 636V627Z M2227 645L2235 638L2244 645Z" fill="#bdbdbd"/>
<path d="M2226 668h4a8 6 0 0 0 14 -2h1v15h-19z" fill="#bdbdbd"/><circle cx="2232" cy="665" r="4" fill="#bdbdbd"/>
<path d="M2226 713h18v5h-2l-1-2h-5v12h3v2h-10v-2h3v-12h-5l-1 2h-2z" fill="#bdbdbd"/><path d="M2226 734q3 3 6 0t6 0 6 0" fill="none" stroke="#bdbdbd" stroke-width="1.300"/>
<path d="M2225 768c4-6 10-7 15-4l-3 3-2 4-5 1-2 4c-2-2-3-5-3-8z" fill="#bdbdbd"/><path d="M2235 774l6-1 7 8-5 4-6-2-3-6z" fill="#bdbdbd"/>

<!-- floating panel -->
<rect x="1795" y="255" width="420" height="1028" fill="#000" opacity=".16" filter="url(#bs)"/>
<rect x="1803" y="258" width="407" height="1019" fill="#535353"/>
<rect x="1803" y="258" width="407" height="5" fill="#383838"/>
<rect x="1803" y="263" width="407" height="34" fill="#424242"/>
<text x="1819" y="285.500" font-size="13.500" font-weight="bold" fill="#8a8a8a" textLength="76" lengthAdjust="spacingAndGlyphs">Character S</text>
<rect x="1893" y="263" width="147" height="34" fill="#535353"/>
<path d="M1903 278l3-3 3 3M1903 283l3 3 3-3" fill="none" stroke="#bbb"/>
<text x="1916" y="285.500" font-size="13.500" font-weight="bold" fill="#ececec" textLength="108" lengthAdjust="spacingAndGlyphs">Paragraph Styles</text>
<text x="2054" y="285.500" font-size="13.500" font-weight="bold" fill="#8a8a8a" textLength="78" lengthAdjust="spacingAndGlyphs">Object Style</text>
<rect x="2129" y="263" width="81" height="34" fill="#424242"/><rect x="2129" y="263" width="1" height="34" fill="#3a3a3a"/>
<path d="M2159 277l4 3-4 3M2166 277l4 3-4 3" fill="none" stroke="#ccc" stroke-width="1.200"/>
<rect x="2180" y="275" width="1" height="11" fill="#aaa"/>
<path d="M2189 276h14M2189 279h14M2189 282h14M2189 285h14" stroke="#b8b8b8"/>
<text class="l" x="1811" y="318.500" textLength="100" lengthAdjust="spacingAndGlyphs">[Basic Paragraph]</text>
<text x="2147" y="319.500" font-size="16" fill="#a8a8a8" textLength="21.500" lengthAdjust="spacingAndGlyphs">[a+]</text>
<path d="M2198 304L2188 316H2192.500L2189 323L2198 311.500H2193.500Z" fill="#a8a8a8"/>
<rect x="1805" y="329" width="404" height="26" fill="#4c6a87"/>
<text x="1848" y="346.500" font-size="12.500" font-weight="bold" fill="#fff" textLength="112" lengthAdjust="spacingAndGlyphs">[Basic Paragraph]</text>
<text class="l" x="1848" y="374.500" textLength="200" lengthAdjust="spacingAndGlyphs">Body with numbers in blue by GREP</text>
<rect x="1805" y="382.500" width="404" height="1" fill="#5c5c5c"/>
<text class="l" x="1848" y="402" textLength="196" lengthAdjust="spacingAndGlyphs">Body with numbers in red by GREP</text>
<rect x="1805" y="409" width="404" height="1" fill="#5c5c5c"/>
<rect x="1805" y="1234" width="404" height="1" fill="#5c5c5c"/>
<path d="M1815 1246v-4h3M1822 1243h7v14h-8M1814 1254h8M1819 1251l3 3-3 3" fill="none" stroke="#b8b8b8" stroke-width="1.300"/><rect x="1822" y="1244" width="5" height="6" fill="#b8b8b8"/>
<path d="M2011 1244h7l2 3h7v10h-16z" fill="#bdbdbd"/><path d="M2022 1249v6" stroke="#222" stroke-width="2"/><path d="M2020 1250l2-2 2 2M2020 1254l2 2 2-2" fill="#222" stroke="#222"/>
<rect x="2045" y="1237" width="1" height="27" fill="#484848"/>
<path d="M2059 1244h7l2 3h8v10h-17z" fill="#bdbdbd"/>
<text x="2093" y="1258" font-size="17" fill="#7f7f7f">¶</text><path d="M2104 1256l8-7M2105 1250l5 6" stroke="#757575" fill="none"/>
<rect x="2132.500" y="1244.500" width="13" height="13" fill="none" stroke="#bdbdbd" stroke-width="1.500"/><path d="M2139 1247.500v7M2135.500 1251h7" stroke="#bdbdbd" stroke-width="1.500"/>
<path d="M2167 1246h12M2171 1246v-2h4v2M2169 1247v11h8v-11M2172 1249v7M2174.500 1249v7" fill="none" stroke="#7f7f7f" stroke-width="1.200"/>
<rect x="1803" y="1266" width="407" height="2" fill="#3c3c3c"/>
<rect x="1803" y="1276" width="407" height="1.500" fill="#3c3c3c"/>
<use href="#grip" x="1994" y="1269"/>
<path d="M1803.500 258V1277M2209.500 258V1277" stroke="#404040"/>

<!-- dialog -->
<rect x="600" y="392" width="1148" height="896" rx="6" fill="#000" opacity=".42" filter="url(#bl)"/>
<rect x="606" y="382.500" width="1136" height="897.500" rx="7" fill="#535353"/>
<path d="M606 421V390Q606 382.500 613 382.500H1735Q1742 382.500 1742 390V421Z" fill="url(#tb)" stroke="#a8a8a8" stroke-width=".6"/>
<text x="616" y="407" font-size="14.500" fill="#151515" textLength="159" lengthAdjust="spacingAndGlyphs">Paragraph Style Options</text>
<rect x="625.800" y="440.500" width="221" height="603.500" fill="#535353" stroke="#3f8fdc" stroke-width="1.500"/>
<rect x="626.500" y="797.500" width="219.500" height="27" fill="#4c6a87"/>
<text class="l" x="631" y="458" textLength="43" lengthAdjust="spacingAndGlyphs">General</text>
<text class="l" x="631" y="485.800" textLength="133" lengthAdjust="spacingAndGlyphs">Basic Character Formats</text>
<text class="l" x="631" y="513.300" textLength="160" lengthAdjust="spacingAndGlyphs">Advanced Character Formats</text>
<text class="l" x="631" y="540.800" textLength="117" lengthAdjust="spacingAndGlyphs">Indents and Spacing</text>
<text class="l" x="631" y="568.300" textLength="27" lengthAdjust="spacingAndGlyphs">Tabs</text>
<text class="l" x="631" y="595.800" textLength="92" lengthAdjust="spacingAndGlyphs">Paragraph Rules</text>
<text class="l" x="631" y="623.300" textLength="99" lengthAdjust="spacingAndGlyphs">Paragraph Border</text>
<text class="l" x="631" y="650.800" textLength="108" lengthAdjust="spacingAndGlyphs">Paragraph Shading</text>
<text class="l" x="631" y="678.300" textLength="73" lengthAdjust="spacingAndGlyphs">Keep Options</text>
<text class="l" x="631" y="705.800" textLength="70" lengthAdjust="spacingAndGlyphs">Hyphenation</text>
<text class="l" x="631" y="733.300" textLength="63" lengthAdjust="spacingAndGlyphs">Justification</text>
<text class="l" x="631" y="760.800" textLength="79" lengthAdjust="spacingAndGlyphs">Span Columns</text>
<text class="l" x="631" y="788.300" textLength="162" lengthAdjust="spacingAndGlyphs">Drop Caps and Nested Styles</text>
<text class="l" x="631" y="815.800" textLength="62" lengthAdjust="spacingAndGlyphs">GREP Style</text>
<text class="l" x="631" y="843.300" textLength="127" lengthAdjust="spacingAndGlyphs">Bullets and Numbering</text>
<text class="l" x="631" y="870.800" textLength="85" lengthAdjust="spacingAndGlyphs">Character Color</text>
<text class="l" x="631" y="898.300" textLength="108" lengthAdjust="spacingAndGlyphs">OpenType Features</text>
<text class="l" x="631" y="925.800" textLength="99" lengthAdjust="spacingAndGlyphs">Underline Options</text>
<text class="l" x="631" y="953.300" textLength="122" lengthAdjust="spacingAndGlyphs">Strikethrough Options</text>
<text class="l" x="631" y="980.800" textLength="86" lengthAdjust="spacingAndGlyphs">Export Tagging</text>

<text class="d" x="1079" y="459" textLength="85" lengthAdjust="spacingAndGlyphs">Style Name:</text>
<rect x="1173.500" y="440.500" width="318" height="25" rx="2" fill="#474747" stroke="#696969"/>
<text class="d" x="1179" y="458" textLength="244.500" lengthAdjust="spacingAndGlyphs">Body with numbers in blue by GREP</text>
<text x="1117" y="488" font-size="12" fill="#dcdcdc" textLength="49" lengthAdjust="spacingAndGlyphs">Location:</text>
<text class="d" x="861" y="515" textLength="74" lengthAdjust="spacingAndGlyphs">GREP Style</text>
<rect x="860" y="529" width="857" height="1" fill="#4a4a4a"/>
<rect x="860.500" y="536.500" width="687.500" height="359" fill="none" stroke="#5e5e5e"/>
<rect x="861" y="607" width="687" height="1" fill="#5e5e5e"/>
<text class="d" x="903" y="563" textLength="81.400" lengthAdjust="spacingAndGlyphs">Apply Style:</text>
<text class="d" x="993" y="563" textLength="30" lengthAdjust="spacingAndGlyphs">Blue</text>
<text class="d" x="927" y="595.500" textLength="58" lengthAdjust="spacingAndGlyphs">To Text:</text>
<text class="d" x="993" y="595.500" textLength="35" lengthAdjust="spacingAndGlyphs">*\d+</text>
<rect x="860.700" y="903" width="138.500" height="31.500" rx="15.700" fill="#535353" stroke="#c8c8c8" stroke-width="1.500"/>
<text class="d" x="873" y="924" textLength="110" lengthAdjust="spacingAndGlyphs">New GREP Style</text>
<rect x="1013" y="902.500" width="111.500" height="32" rx="16" fill="#5a5a5a"/>
<text x="1046" y="924" font-size="15" fill="#787878" textLength="44" lengthAdjust="spacingAndGlyphs">Delete</text>
<path d="M1489.500 908L1496 915H1492.500V923H1486.500V915H1483Z" fill="#8a8a8a"/>
<path d="M1526.500 923L1533 916H1529.500V908H1523.500V916H1520Z" fill="#8a8a8a"/>
<rect x="625.500" y="1228" width="15" height="15" rx="2.500" fill="#b8b8b8"/><path d="M629 1236l3 3 5-8" fill="none" stroke="#535353" stroke-width="1.600"/>
<text class="d" x="650" y="1241" textLength="53.500" lengthAdjust="spacingAndGlyphs">Preview</text>
<rect x="1475.200" y="1223" width="116" height="31" rx="15.500" fill="#535353" stroke="#f0f0f0" stroke-width="2.400"/>
<text class="d" x="1522" y="1244" textLength="20.600" lengthAdjust="spacingAndGlyphs">OK</text>
<rect x="1604.500" y="1222.700" width="118" height="31.500" rx="15.700" fill="#535353" stroke="#c8c8c8" stroke-width="1.500"/>
<text class="d" x="1640.500" y="1244" textLength="46" lengthAdjust="spacingAndGlyphs">Cancel</text>
</svg>
</body></html>
